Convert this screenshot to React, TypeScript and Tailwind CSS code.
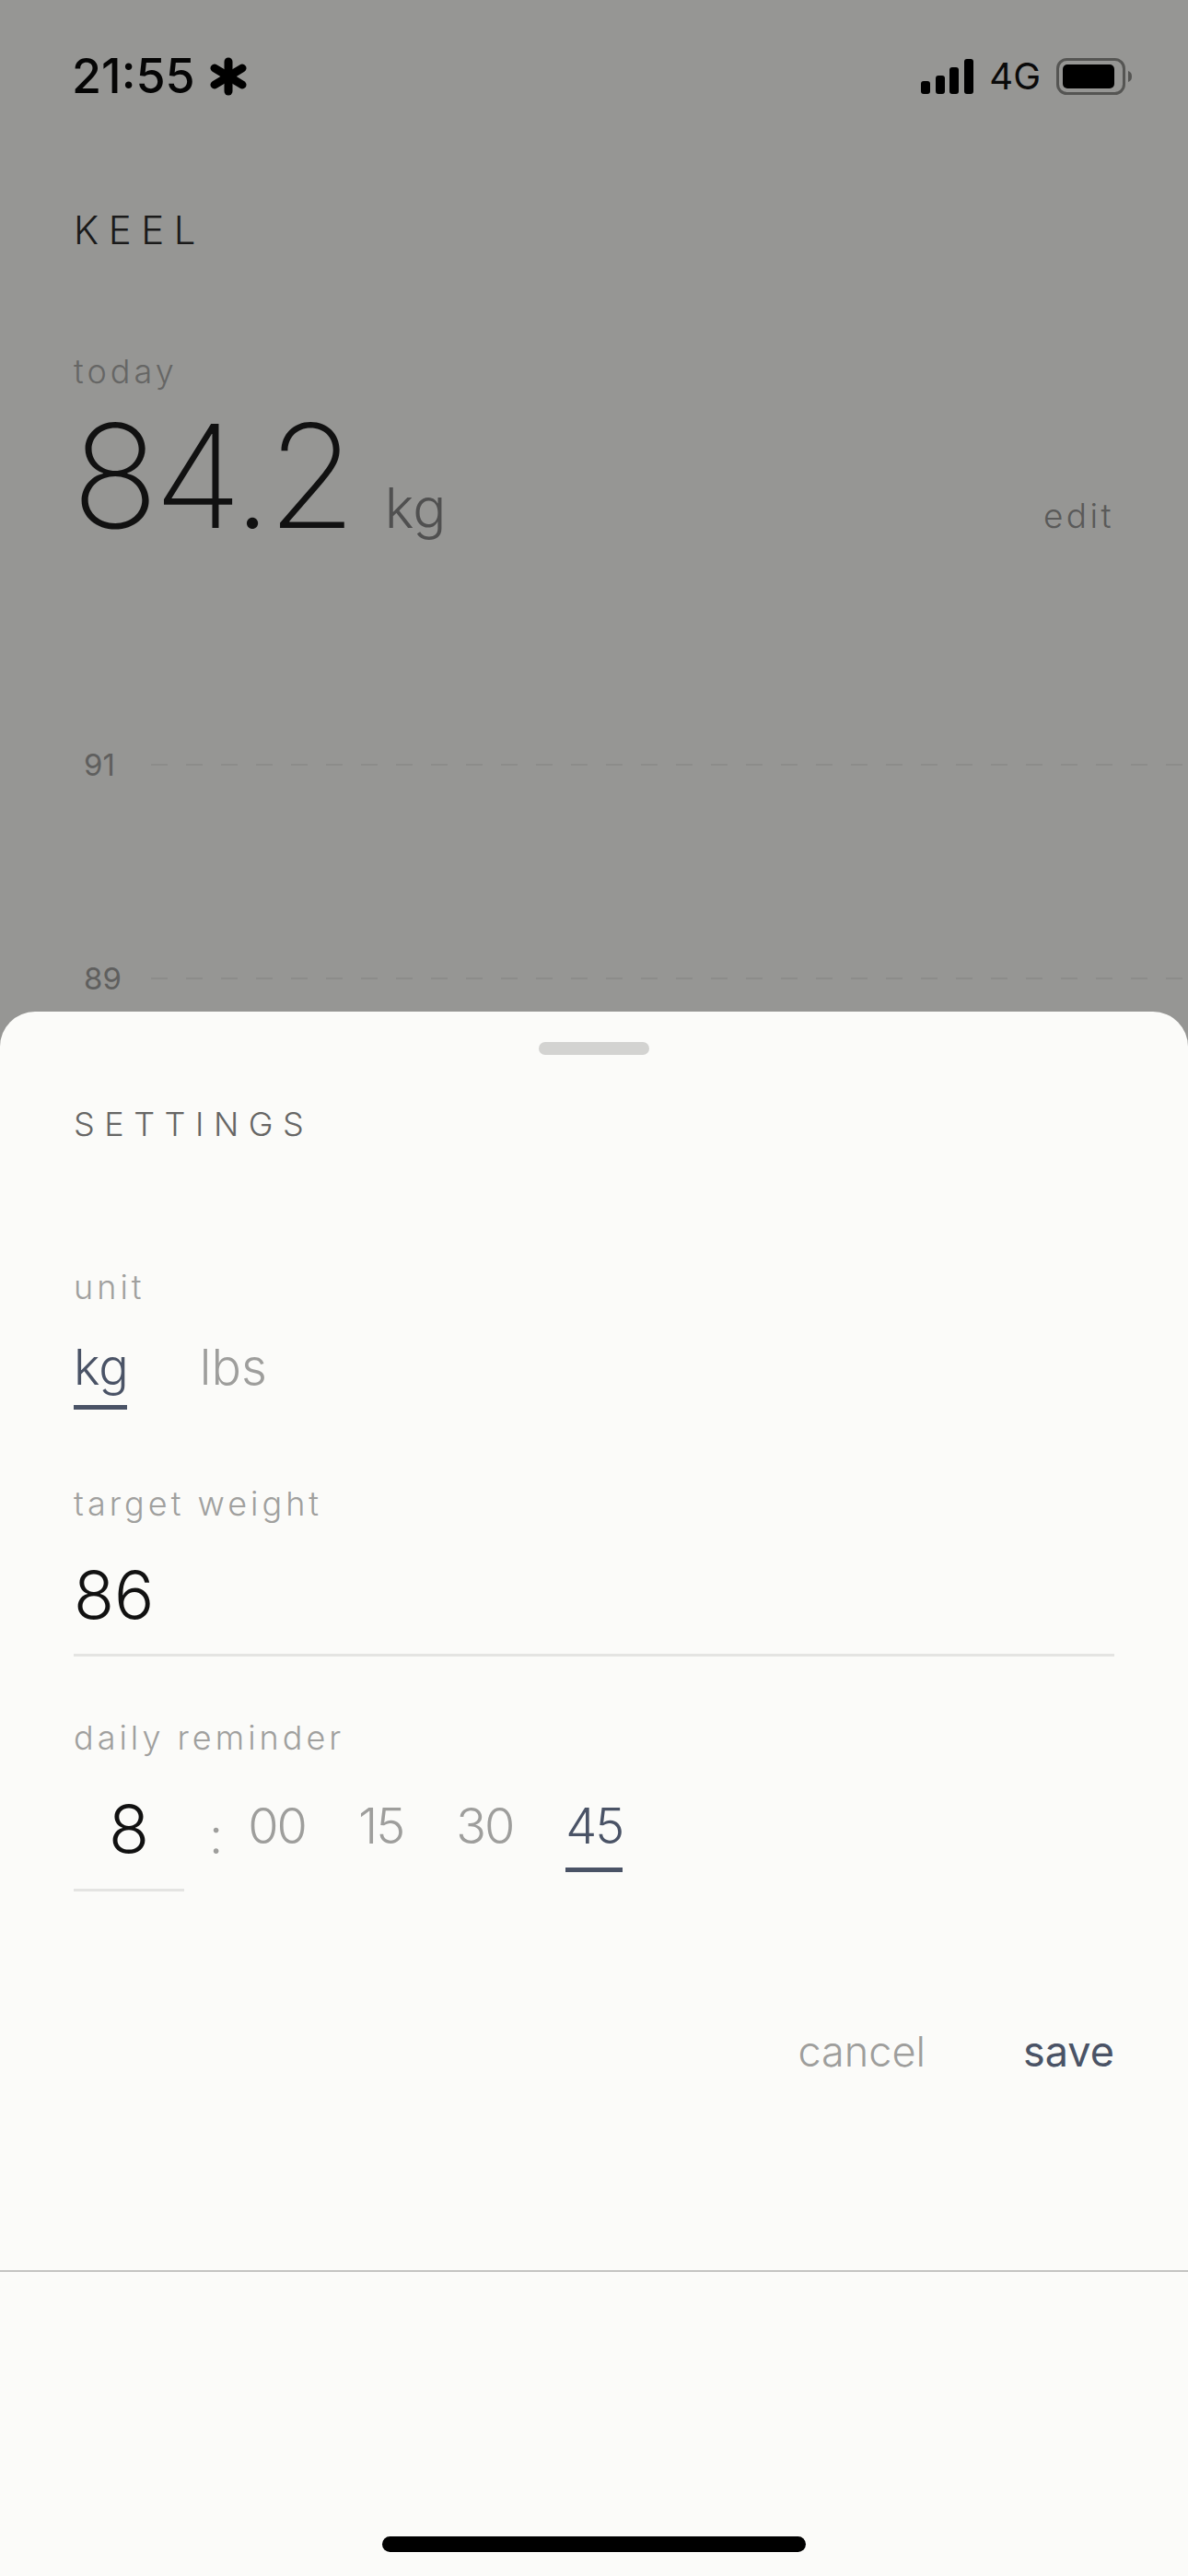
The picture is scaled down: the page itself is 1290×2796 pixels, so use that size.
const inter = "font-['Inter','Liberation_Sans',sans-serif]";

function Signal() {
  return (
    <svg width="57" height="38" viewBox="0 0 57 38" fill="#000">
      <rect x="0" y="24" width="10" height="14" rx="3" />
      <rect x="16" y="18" width="10" height="20" rx="3" />
      <rect x="31" y="9" width="10" height="29" rx="3" />
      <rect x="47" y="0" width="10" height="38" rx="3" />
    </svg>
  );
}

function Battery() {
  return (
    <svg width="82" height="40" viewBox="0 0 82 40">
      <rect x="1.5" y="1.5" width="72" height="37" rx="10" fill="none" stroke="#555553" strokeWidth="3" />
      <rect x="7" y="7" width="56" height="26" rx="5" fill="#000" />
      <path d="M78 14 C81 15 82 17 82 20 C82 23 81 25 78 26 Z" fill="#555553" />
    </svg>
  );
}

function Asterisk() {
  return (
    <svg width="40" height="42" viewBox="0 0 40 42" stroke="#000" strokeWidth="9" strokeLinecap="round">
      <line x1="20" y1="5" x2="20" y2="37" />
      <line x1="5" y1="12" x2="35" y2="30" />
      <line x1="35" y1="12" x2="5" y2="30" />
    </svg>
  );
}

function GridLine({ label, className }: { label: string; className: string }) {
  return (
    <div className={`flex items-center h-[40px] ${className}`}>
      <span className="w-[73px] text-[33px] leading-[40px] font-normal text-[#5f5f5e]">{label}</span>
      <div className="flex-1 h-[2px] bg-[repeating-linear-gradient(to_right,#8c8c8a_0,#8c8c8a_18px,transparent_18px,transparent_38px)]" />
    </div>
  );
}

function Label({ children }: { children: string }) {
  return <div className="text-[36px] leading-[44px] font-light tracking-[4px] text-[#a0a09e]">{children}</div>;
}

export default function App() {
  return (
    <div className={`relative w-[1290px] h-[2796px] overflow-hidden bg-[#969694] ${inter}`}>
      <div className="flex items-center justify-between h-[46px] mt-[60px] pl-[78px] pr-[61px]">
        <div className="flex items-center gap-[16px]">
          <span className="text-[52px] leading-[46px] font-medium text-[#050505]">21:55</span>
          <Asterisk />
        </div>
        <div className="flex items-center">
          <Signal />
          <span className="ml-[17px] mr-[17px] text-[40px] leading-[46px] text-[#0a0a0a]">4G</span>
          <Battery />
        </div>
      </div>

      <div className="pt-[123px] px-[80px]">
        <div className="text-[42px] leading-[42px] font-light tracking-[10.5px] text-[#1a1a1a]">KEEL</div>
        <div className="mt-[110px] text-[36px] leading-[44px] font-light tracking-[4px] text-[#666665]">today</div>
        <div className="mt-[14px] flex items-baseline justify-between">
          <div className="flex items-baseline -ml-[2px]">
            <span className="text-[156px] leading-[156px] font-extralight tracking-[-5px] text-[#111]">84.2</span>
            <span className="ml-[36px] text-[60px] leading-[60px] font-light text-[#505050]">kg</span>
          </div>
          <span className="text-[37px] leading-[44px] font-light tracking-[3.4px] text-[#5a5a59]">edit</span>
        </div>
      </div>

      <div className="pl-[91px] mt-[215px]">
        <GridLine label="91" className="" />
        <GridLine label="89" className="mt-[192px]" />
      </div>

      <div className="absolute left-0 right-0 top-[1098px] bottom-0 rounded-t-[38px] bg-[#fbfbf9] flex flex-col">
        <div className="mt-[33px] self-center w-[120px] h-[14px] rounded-full bg-[#d3d3d1]" />
        <div className="mt-[53px] pl-[80px] text-[36px] leading-[44px] font-light tracking-[10.5px] text-[#666665]">SETTINGS</div>

        <div className="mt-[133px] px-[80px] flex flex-col">
          <Label>unit</Label>
          <div className="mt-[31px] flex gap-[77px]">
            <div className="flex flex-col">
              <span className="text-[54px] leading-[68px] font-light text-[#4a5366]">kg</span>
              <div className="mt-[7px] h-[5px] w-[58px] bg-[#4a5366]" />
            </div>
            <span className="text-[54px] leading-[68px] font-light text-[#9e9e9c]">lbs</span>
          </div>
        </div>

        <div className="mt-[80px] px-[80px] flex flex-col">
          <Label>target weight</Label>
          <div className="mt-[35px] pb-[22px] border-b-[3px] border-[#e4e4e2] text-[72px] leading-[84px] font-light text-[#111]">86</div>
        </div>

        <div className="mt-[66px] px-[80px] flex flex-col">
          <Label>daily reminder</Label>
          <div className="mt-[29px] flex">
            <div className="w-[120px] h-[116px] border-b-[3px] border-[#e4e4e2] text-center text-[72px] leading-[96px] font-light text-[#111]">8</div>
            <span className="ml-[27px] mt-[26px] text-[54px] leading-[60px] font-light text-[#9e9e9c]">:</span>
            <div className="ml-[27px] flex gap-[57px]">
              <span className="text-[54px] leading-[90px] font-light tracking-[-2px] text-[#9e9e9c]">00</span>
              <span className="text-[54px] leading-[90px] font-light tracking-[-2px] text-[#9e9e9c]">15</span>
              <span className="text-[54px] leading-[90px] font-light tracking-[-2px] text-[#9e9e9c]">30</span>
              <div className="flex flex-col">
                <span className="text-[54px] leading-[90px] font-light tracking-[-2px] text-[#4a5366]">45</span>
                <div className="h-[5px] bg-[#4a5366]" />
              </div>
            </div>
          </div>
        </div>

        <div className="mt-[146px] pr-[80px] flex justify-end gap-[106px] text-[45px] leading-[56px]">
          <span className="font-light text-[#9e9e9c]">cancel</span>
          <span className="text-[#4a5366]">save</span>
        </div>

        <div className="mt-[209px] h-[2px] bg-[#c4c4c2]" />
        <div className="mt-[287px] self-center w-[460px] h-[17px] rounded-full bg-black" />
      </div>
    </div>
  );
}
